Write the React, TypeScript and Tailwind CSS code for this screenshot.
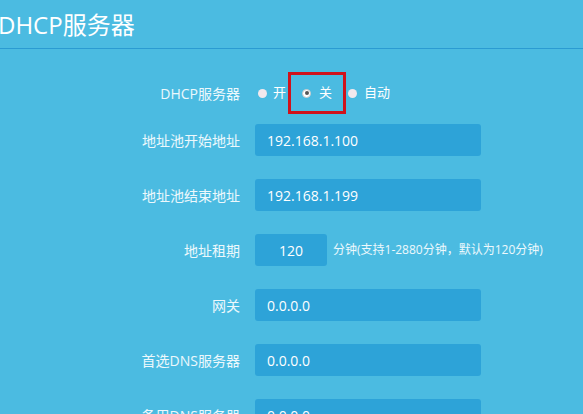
import React from "react";

const rows = [
  { label: "地址池开始地址", value: "192.168.1.100" },
  { label: "地址池结束地址", value: "192.168.1.199" },
  { label: "地址租期", value: "120", short: true },
  { label: "网关", value: "0.0.0.0" },
  { label: "首选DNS服务器", value: "0.0.0.0" },
  { label: "备用DNS服务器", value: "0.0.0.0" },
];

const Radio = ({ checked }: { checked?: boolean }) =>
  checked ? (
    <span className="flex h-[9px] w-[9px] shrink-0 items-center justify-center rounded-full border border-[#c9c9c9] bg-white">
      <span className="h-[4px] w-[4px] rounded-full bg-[#555]" />
    </span>
  ) : (
    <span className="block h-[9px] w-[9px] shrink-0 rounded-full bg-[#f2e8ed]" />
  );

const App = () => {
  return (
    <div className="h-[414px] w-[583px] overflow-hidden bg-[#4bbbe1] font-['Open_Sans','Noto_Sans_CJK_SC',sans-serif] text-white">
      <div className="h-[49px] border-b border-[#2b9bd2] pt-[9px]">
        <h1 className="ml-[-2px] text-[24px] leading-[32px]">DHCP服务器</h1>
      </div>

      <div className="mt-[23px] flex h-[42px] items-center">
        <div className="w-[240px] text-right text-[14px] text-white/90">DHCP服务器</div>
        <div className="ml-[18px] flex items-center text-[13px]">
          <Radio />
          <span className="ml-[6px]">开</span>
          <div className="ml-[2px] flex h-[42px] w-[58px] items-center border-[3px] border-[#d0121b] pl-[11px]">
            <Radio checked />
            <span className="ml-[8px]">关</span>
          </div>
          <div className="ml-[2px] flex items-center">
            <Radio />
            <span className="ml-[7px]">自动</span>
          </div>
        </div>
      </div>

      <div className="mt-[10px] flex flex-col gap-[23px]">
        {rows.map((r) => (
          <div key={r.label} className="flex h-[32px] items-center">
            <div className="w-[240px] text-right text-[14px] text-white/90">{r.label}</div>
            {r.short ? (
              <>
                <div className="ml-[15px] flex h-[32px] w-[72px] items-center justify-center rounded-[3px] bg-[#2da3d8] text-[14px]">
                  {r.value}
                </div>
                <span className="ml-[6px] text-[12px] text-white/90">分钟(支持1-2880分钟，默认为120分钟)</span>
              </>
            ) : (
              <div className="ml-[15px] flex h-[32px] w-[226px] items-center rounded-[3px] bg-[#2da3d8] pl-[12px] text-[14px]">
                {r.value}
              </div>
            )}
          </div>
        ))}
      </div>
    </div>
  );
};

export default App;
